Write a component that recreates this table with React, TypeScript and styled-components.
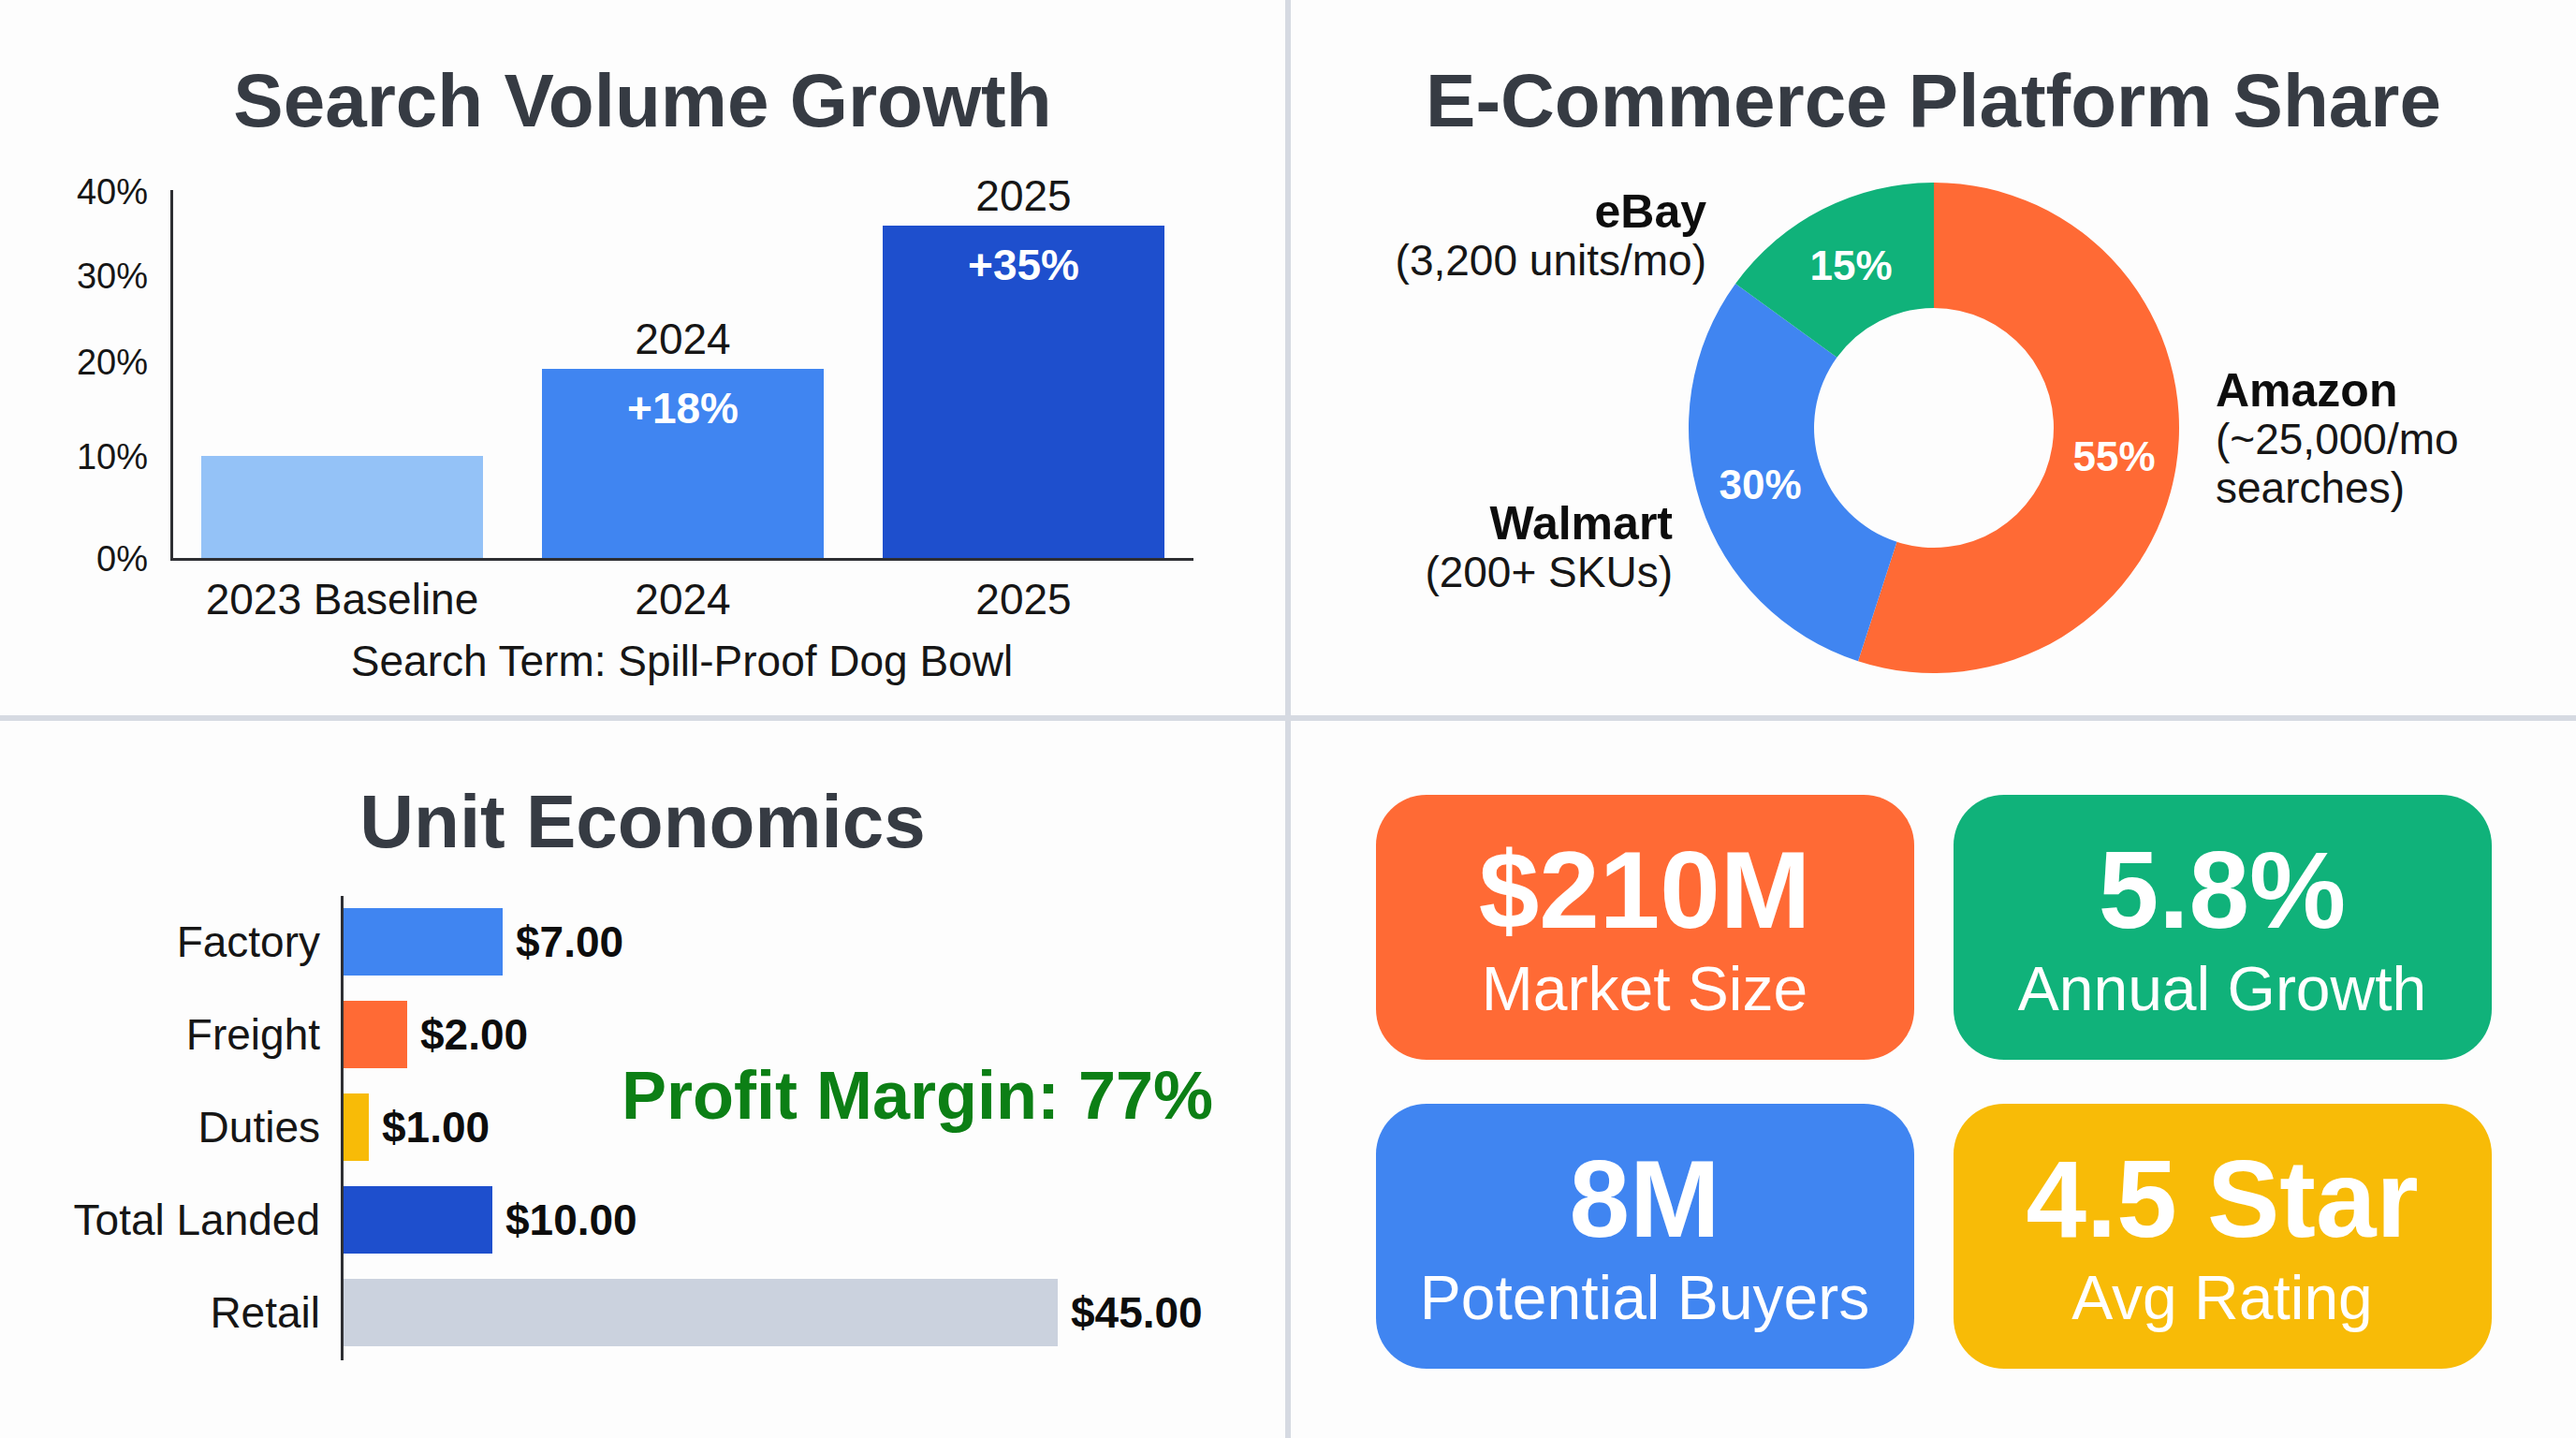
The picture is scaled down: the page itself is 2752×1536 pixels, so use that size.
import React from 'react';
import styled, { createGlobalStyle } from 'styled-components';

const GlobalStyle = createGlobalStyle`
  html, body {
    margin: 0;
    padding: 0;
    background: #fdfdfd;
  }
  body {
    font-family: "Liberation Sans", Arial, Helvetica, sans-serif;
    color: #161616;
  }
`;

const ORANGE = '#ff6a35';
const BLUE = '#4085f1';
const DARK_BLUE = '#1e4fcd';
const LIGHT_BLUE = '#94c2f7';
const GREEN = '#10b27a';
const YELLOW = '#f8bb07';
const GREY = '#cbd2de';
const AXIS = '#2e2f33';

const Board = styled.div`
  width: 2752px;
  height: 1536px;
  display: grid;
  grid-template-columns: 1373px 1373px;
  grid-template-rows: 764px 766px;
  gap: 6px;
  background: #d6dae2;
  overflow: hidden;
`;

const Panel = styled.section`
  position: relative;
  display: flex;
  flex-direction: column;
  background: #fdfdfd;
  overflow: hidden;
`;

const Title = styled.h2`
  margin: 0;
  padding-top: 68px;
  font-size: 80px;
  line-height: 80px;
  font-weight: 700;
  text-align: center;
  color: #363b43;
`;

/* ---------- search volume bar chart ---------- */

const VChart = styled.div`
  display: grid;
  grid-template-columns: 158px 1093px;
  column-gap: 24px;
  margin-top: 55px;
`;

const TickCol = styled.div`
  position: relative;
  height: 396px;
`;

const Tick = styled.span<{ $y: number }>`
  position: absolute;
  right: 0;
  top: ${p => p.$y}px;
  transform: translateY(-50%);
  font-size: 38px;
  line-height: 1;
`;

const Plot = styled.div`
  height: 396px;
  box-sizing: border-box;
  display: flex;
  align-items: flex-end;
  gap: 63px;
  padding-left: 30px;
  border-left: 3px solid ${AXIS};
  border-bottom: 3px solid ${AXIS};
`;

const BarCol = styled.div`
  width: 301px;
  display: flex;
  flex-direction: column;
`;

const BarYear = styled.div`
  margin-bottom: 9px;
  font-size: 46px;
  line-height: 1;
  text-align: center;
`;

const VBar = styled.div<{ $color: string }>`
  box-sizing: border-box;
  padding-top: 19px;
  background: ${p => p.$color};
  color: #fff;
  font-size: 46px;
  line-height: 1;
  font-weight: 700;
  text-align: center;
`;

const XLabels = styled.div`
  grid-column: 2;
  display: flex;
  gap: 63px;
  padding-left: 33px;
  margin-top: 18px;
`;

const XLabel = styled.div`
  width: 301px;
  font-size: 46px;
  line-height: 1;
  text-align: center;
`;

const Caption = styled.div`
  grid-column: 2;
  margin-top: 20px;
  font-size: 46px;
  line-height: 1;
  text-align: center;
`;

const ticks = [
  { label: '40%', y: 2 },
  { label: '30%', y: 92 },
  { label: '20%', y: 184 },
  { label: '10%', y: 285 },
  { label: '0%', y: 394 },
];

const growth = [
  { name: '2023 Baseline', height: 109, color: LIGHT_BLUE },
  { name: '2024', height: 202, color: BLUE, year: '2024', change: '+18%' },
  { name: '2025', height: 355, color: DARK_BLUE, year: '2025', change: '+35%' },
];

const SearchVolume = () => (
  <Panel>
    <Title>Search Volume Growth</Title>
    <VChart>
      <TickCol>
        {ticks.map(t => (
          <Tick key={t.label} $y={t.y}>
            {t.label}
          </Tick>
        ))}
      </TickCol>
      <Plot>
        {growth.map(g => (
          <BarCol key={g.name}>
            {g.year && <BarYear>{g.year}</BarYear>}
            <VBar $color={g.color} style={{ height: g.height }}>
              {g.change}
            </VBar>
          </BarCol>
        ))}
      </Plot>
      <XLabels>
        {growth.map(g => (
          <XLabel key={g.name}>{g.name}</XLabel>
        ))}
      </XLabels>
      <Caption>Search Term: Spill-Proof Dog Bowl</Caption>
    </VChart>
  </Panel>
);

/* ---------- platform donut ---------- */

const Stage = styled.div`
  position: relative;
  height: 524px;
  margin-top: 47px;
`;

const DonutSvg = styled.svg`
  display: block;
  margin: 0 auto;
`;

const PlatformLabel = styled.div<{ $top: number; $left?: number; $right?: number }>`
  position: absolute;
  top: ${p => p.$top}px;
  ${p => (p.$left !== undefined ? `left: ${p.$left}px;` : '')}
  ${p => (p.$right !== undefined ? `right: ${p.$right}px; text-align: right;` : '')}
  white-space: nowrap;
`;

const PlatformName = styled.div`
  font-size: 50px;
  line-height: 52px;
  font-weight: 700;
  color: #0d0d0d;
`;

const PlatformDetail = styled.div`
  font-size: 46px;
  line-height: 52px;
`;

const R_OUT = 262;
const R_IN = 128;
const C = 262;

const pt = (deg: number, r: number) => {
  const a = (deg * Math.PI) / 180;
  return [C + r * Math.sin(a), C - r * Math.cos(a)];
};

const arc = (a0: number, a1: number) => {
  const large = a1 - a0 > 180 ? 1 : 0;
  const [x0, y0] = pt(a0, R_OUT);
  const [x1, y1] = pt(a1, R_OUT);
  const [x2, y2] = pt(a1, R_IN);
  const [x3, y3] = pt(a0, R_IN);
  return `M${x0} ${y0} A${R_OUT} ${R_OUT} 0 ${large} 1 ${x1} ${y1} L${x2} ${y2} A${R_IN} ${R_IN} 0 ${large} 0 ${x3} ${y3} Z`;
};

const shares = [
  { name: 'Amazon', pct: 55, color: ORANGE },
  { name: 'Walmart', pct: 30, color: BLUE },
  { name: 'eBay', pct: 15, color: GREEN },
];

const PlatformShare = () => {
  let start = 0;
  const slices = shares.map(s => {
    const end = start + s.pct * 3.6;
    const mid = (start + end) / 2;
    const slice = { ...s, d: arc(start, end), label: pt(mid, (R_OUT + R_IN) / 2) };
    start = end;
    return slice;
  });

  return (
    <Panel>
      <Title>E-Commerce Platform Share</Title>
      <Stage>
        <DonutSvg width={524} height={524} viewBox="0 0 524 524">
          {slices.map(s => (
            <path key={s.name} d={s.d} fill={s.color} />
          ))}
          {slices.map(s => (
            <text
              key={s.name}
              x={s.label[0]}
              y={s.label[1]}
              fill="#fff"
              fontSize={44}
              fontWeight={700}
              fontFamily='"Liberation Sans", Arial, sans-serif'
              textAnchor="middle"
              dominantBaseline="central"
            >
              {s.pct}%
            </text>
          ))}
        </DonutSvg>
        <PlatformLabel $top={5} $right={929}>
          <PlatformName>eBay</PlatformName>
          <PlatformDetail>(3,200 units/mo)</PlatformDetail>
        </PlatformLabel>
        <PlatformLabel $top={338} $right={965}>
          <PlatformName>Walmart</PlatformName>
          <PlatformDetail>(200+ SKUs)</PlatformDetail>
        </PlatformLabel>
        <PlatformLabel $top={196} $left={988}>
          <PlatformName>Amazon</PlatformName>
          <PlatformDetail>(~25,000/mo</PlatformDetail>
          <PlatformDetail>searches)</PlatformDetail>
        </PlatformLabel>
      </Stage>
    </Panel>
  );
};

/* ---------- unit economics ---------- */

const HChart = styled.div`
  position: relative;
  display: flex;
  gap: 22px;
  margin-top: 39px;
`;

const CostLabels = styled.div`
  width: 342px;
  display: flex;
  flex-direction: column;
  gap: 27px;
  padding: 13px 0 15px;
`;

const CostLabel = styled.div`
  height: 72px;
  line-height: 72px;
  font-size: 46px;
  text-align: right;
  white-space: nowrap;
`;

const CostBars = styled.div`
  display: flex;
  flex-direction: column;
  gap: 27px;
  padding: 13px 0 15px;
  border-left: 3px solid ${AXIS};
`;

const CostRow = styled.div`
  height: 72px;
  display: flex;
  align-items: center;
  gap: 14px;
`;

const HBar = styled.div<{ $color: string }>`
  height: 72px;
  background: ${p => p.$color};
`;

const CostValue = styled.span`
  font-size: 46px;
  font-weight: 700;
  line-height: 1;
  color: #0d0d0d;
`;

const Margin = styled.div`
  position: absolute;
  left: 664px;
  top: 213px;
  transform: translateY(-50%);
  font-size: 72px;
  line-height: 1;
  font-weight: 700;
  color: #0c7f15;
  white-space: nowrap;
`;

const costs = [
  { name: 'Factory', value: '$7.00', width: 170, color: BLUE },
  { name: 'Freight', value: '$2.00', width: 68, color: ORANGE },
  { name: 'Duties', value: '$1.00', width: 27, color: YELLOW },
  { name: 'Total Landed', value: '$10.00', width: 159, color: DARK_BLUE },
  { name: 'Retail', value: '$45.00', width: 763, color: GREY },
];

const UnitEconomics = () => (
  <Panel>
    <Title>Unit Economics</Title>
    <HChart>
      <CostLabels>
        {costs.map(c => (
          <CostLabel key={c.name}>{c.name}</CostLabel>
        ))}
      </CostLabels>
      <CostBars>
        {costs.map(c => (
          <CostRow key={c.name}>
            <HBar $color={c.color} style={{ width: c.width }} />
            <CostValue>{c.value}</CostValue>
          </CostRow>
        ))}
      </CostBars>
      <Margin>Profit Margin: 77%</Margin>
    </HChart>
  </Panel>
);

/* ---------- KPI cards ---------- */

const CardGrid = styled.div`
  display: grid;
  grid-template-columns: repeat(2, 575px);
  grid-template-rows: repeat(2, 283px);
  column-gap: 42px;
  row-gap: 47px;
  justify-content: center;
  padding-top: 79px;
`;

const Card = styled.div<{ $color: string }>`
  border-radius: 54px;
  background: ${p => p.$color};
  color: #fff;
  display: flex;
  flex-direction: column;
  align-items: center;
  justify-content: center;
  gap: 14px;
`;

const CardValue = styled.div`
  font-size: 116px;
  line-height: 1;
  font-weight: 700;
`;

const CardLabel = styled.div`
  font-size: 66px;
  line-height: 1;
`;

const kpis = [
  { value: '$210M', label: 'Market Size', color: ORANGE },
  { value: '5.8%', label: 'Annual Growth', color: GREEN },
  { value: '8M', label: 'Potential Buyers', color: BLUE },
  { value: '4.5 Star', label: 'Avg Rating', color: YELLOW },
];

const Highlights = () => (
  <Panel>
    <CardGrid>
      {kpis.map(k => (
        <Card key={k.label} $color={k.color}>
          <CardValue>{k.value}</CardValue>
          <CardLabel>{k.label}</CardLabel>
        </Card>
      ))}
    </CardGrid>
  </Panel>
);

const App: React.FC = () => (
  <>
    <GlobalStyle />
    <Board>
      <SearchVolume />
      <PlatformShare />
      <UnitEconomics />
      <Highlights />
    </Board>
  </>
);

export default App;
